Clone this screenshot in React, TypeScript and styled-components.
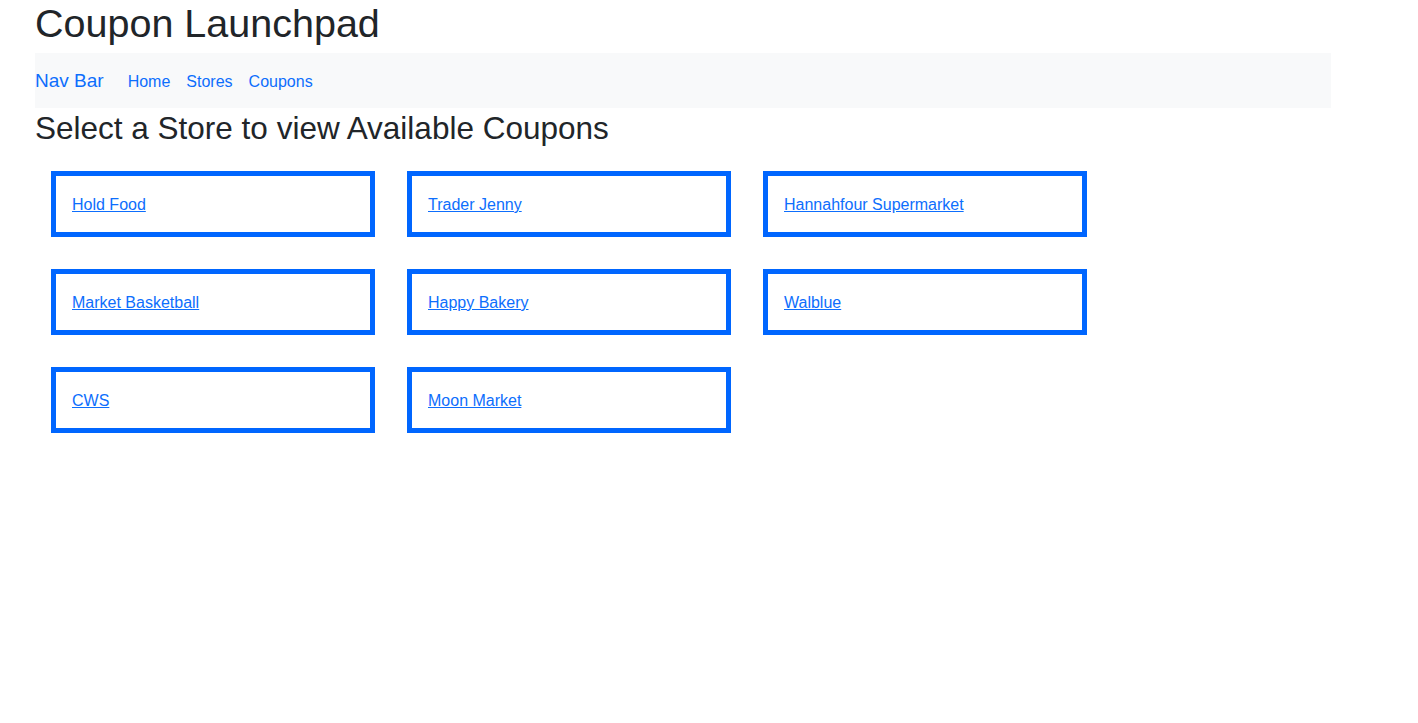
import styled, { createGlobalStyle } from "styled-components";

const GlobalStyle = createGlobalStyle`
  body {
    margin: 0;
    background: #fff;
    color: #212529;
    font-family: "Liberation Sans", Arial, sans-serif;
    font-size: 16px;
    line-height: 1.5;
  }
  * {
    box-sizing: border-box;
  }
`;

const Page = styled.div`
  width: 1296px;
  margin-left: 35px;
`;

const Title = styled.h1`
  margin: 0 0 7px;
  font-size: 39.5px;
  font-weight: 400;
  line-height: 46px;
`;

const NavBar = styled.nav`
  display: flex;
  align-items: center;
  height: 55px;
  padding: 9px 0 7px;
  background: #f8f9fa;
`;

const Brand = styled.a`
  margin-right: 16px;
  padding: 5px 0;
  font-size: 19px;
  color: #0d6efd;
  text-decoration: none;
`;

const NavLink = styled.a`
  padding: 8px;
  color: #0d6efd;
  text-decoration: none;
`;

const Heading = styled.h2`
  margin: 0;
  padding-top: 2px;
  font-size: 31.5px;
  font-weight: 400;
  line-height: 1.2;
`;

const StoreGrid = styled.div`
  display: grid;
  grid-template-columns: repeat(3, 324px);
  gap: 32px;
  padding: 23px 0 0 16px;
`;

const StoreCard = styled.div`
  height: 66px;
  padding: 17px 16px 15px;
  border: 5px solid #0066ff;
`;

const StoreLink = styled.a`
  color: #0d6efd;
  text-decoration: underline;
`;

const stores = [
  "Hold Food",
  "Trader Jenny",
  "Hannahfour Supermarket",
  "Market Basketball",
  "Happy Bakery",
  "Walblue",
  "CWS",
  "Moon Market",
];

export default function App() {
  return (
    <>
      <GlobalStyle />
      <Page>
        <Title>Coupon Launchpad</Title>
        <NavBar>
          <Brand href="#">Nav Bar</Brand>
          <NavLink href="#">Home</NavLink>
          <NavLink href="#">Stores</NavLink>
          <NavLink href="#">Coupons</NavLink>
        </NavBar>
        <Heading>Select a Store to view Available Coupons</Heading>
        <StoreGrid>
          {stores.map((name) => (
            <StoreCard key={name}>
              <StoreLink href="#">{name}</StoreLink>
            </StoreCard>
          ))}
        </StoreGrid>
      </Page>
    </>
  );
}
